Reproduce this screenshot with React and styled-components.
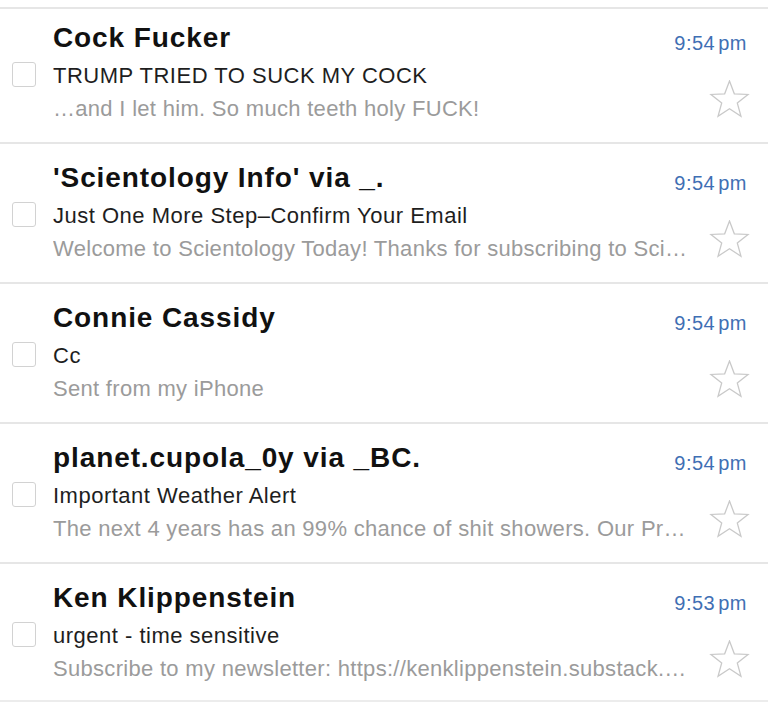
import styled, { createGlobalStyle } from "styled-components";

const emails = [
  {
    from: "Cock Fucker",
    subject: "TRUMP TRIED TO SUCK MY COCK",
    preview: "…and I let him. So much teeth holy FUCK!",
    time: "9:54",
  },
  {
    from: "'Scientology Info' via _.",
    subject: "Just One More Step–Confirm Your Email",
    preview: "Welcome to Scientology Today! Thanks for subscribing to Sci…",
    time: "9:54",
  },
  {
    from: "Connie Cassidy",
    subject: "Cc",
    preview: "Sent from my iPhone",
    time: "9:54",
  },
  {
    from: "planet.cupola_0y via _BC.",
    subject: "Important Weather Alert",
    preview: "The next 4 years has an 99% chance of shit showers. Our Pr…",
    time: "9:54",
  },
  {
    from: "Ken Klippenstein",
    subject: "urgent - time sensitive",
    preview: "Subscribe to my newsletter: https://kenklippenstein.substack.…",
    time: "9:53",
  },
];

export default function App() {
  return (
    <>
      <GlobalStyle />
      <Inbox>
        {emails.map((mail, i) => (
          <Row
            key={i}
            $first={i === 0}
            $last={i === emails.length - 1}
          >
            <CheckColumn>
              <CheckBox />
            </CheckColumn>
            <Content>
              <Header>
                <Sender>{mail.from}</Sender>
                <Time>
                  {mail.time}
                  <Meridiem>pm</Meridiem>
                </Time>
              </Header>
              <Body>
                <Lines>
                  <Subject>{mail.subject}</Subject>
                  <Preview>{mail.preview}</Preview>
                </Lines>
                <Star />
              </Body>
            </Content>
          </Row>
        ))}
      </Inbox>
    </>
  );
}

function Star() {
  return (
    <StarIcon viewBox="-1 0 42 39" width="41" height="38">
      <polygon
        points="20,1 24.94,14.2 39.02,14.82 27.99,23.6 31.76,37.18 20,29.4 8.24,37.18 12.01,23.6 0.98,14.82 15.06,14.2"
        fill="none"
        stroke="#c9c9c9"
        strokeWidth="1.3"
        strokeLinejoin="miter"
      />
    </StarIcon>
  );
}

const GlobalStyle = createGlobalStyle`
  body {
    margin: 0;
    background: #ffffff;
    font-family: "Liberation Sans", Arial, sans-serif;
  }
`;

const Inbox = styled.div`
  margin-top: 7px;
  width: 768px;
`;

// the first row is cut a little at the top of the shot
const Row = styled.div`
  display: flex;
  box-sizing: border-box;
  height: ${(p) => (p.$first ? 135 : 140)}px;
  padding-top: ${(p) => (p.$first ? 0 : 5)}px;
  border-top: 2px solid #e6e6e6;
  border-bottom: ${(p) => (p.$last ? "2px solid #ececec" : "none")};
`;

const CheckColumn = styled.div`
  width: 53px;
  flex-shrink: 0;
  padding-top: 53px;
  padding-left: 12px;
  box-sizing: border-box;
`;

const CheckBox = styled.div`
  width: 24px;
  height: 25px;
  box-sizing: border-box;
  border: 1.5px solid #d2d2d2;
  border-radius: 3px;
`;

const Content = styled.div`
  flex: 1;
  min-width: 0;
  display: flex;
  flex-direction: column;
`;

const Header = styled.div`
  display: flex;
  align-items: flex-end;
  justify-content: space-between;
  padding-top: 11px;
  padding-right: 21px;
`;

const Sender = styled.div`
  font-size: 28px;
  font-weight: bold;
  letter-spacing: 0.9px;
  line-height: 35px;
  color: #111111;
  white-space: nowrap;
`;

const Time = styled.div`
  font-size: 20px;
  line-height: 24px;
  letter-spacing: 0.5px;
  color: #3f6fb4;
  white-space: nowrap;
`;

const Meridiem = styled.span`
  margin-left: 3px;
`;

const Body = styled.div`
  display: flex;
  padding-right: 18px;
`;

const Lines = styled.div`
  flex: 1;
  min-width: 0;
  padding-right: 8px;
`;

const Subject = styled.div`
  margin-top: 6px;
  font-size: 22px;
  line-height: 30px;
  letter-spacing: 0.5px;
  color: #1e1e1e;
  white-space: nowrap;
  overflow: hidden;
  text-overflow: ellipsis;
`;

const Preview = styled.div`
  margin-top: 3px;
  font-size: 22px;
  line-height: 30px;
  letter-spacing: 0.3px;
  color: #9b9b9b;
  white-space: nowrap;
  overflow: hidden;
  text-overflow: ellipsis;
`;

const StarIcon = styled.svg`
  flex-shrink: 0;
  margin-top: 25px;
  display: block;
`;
